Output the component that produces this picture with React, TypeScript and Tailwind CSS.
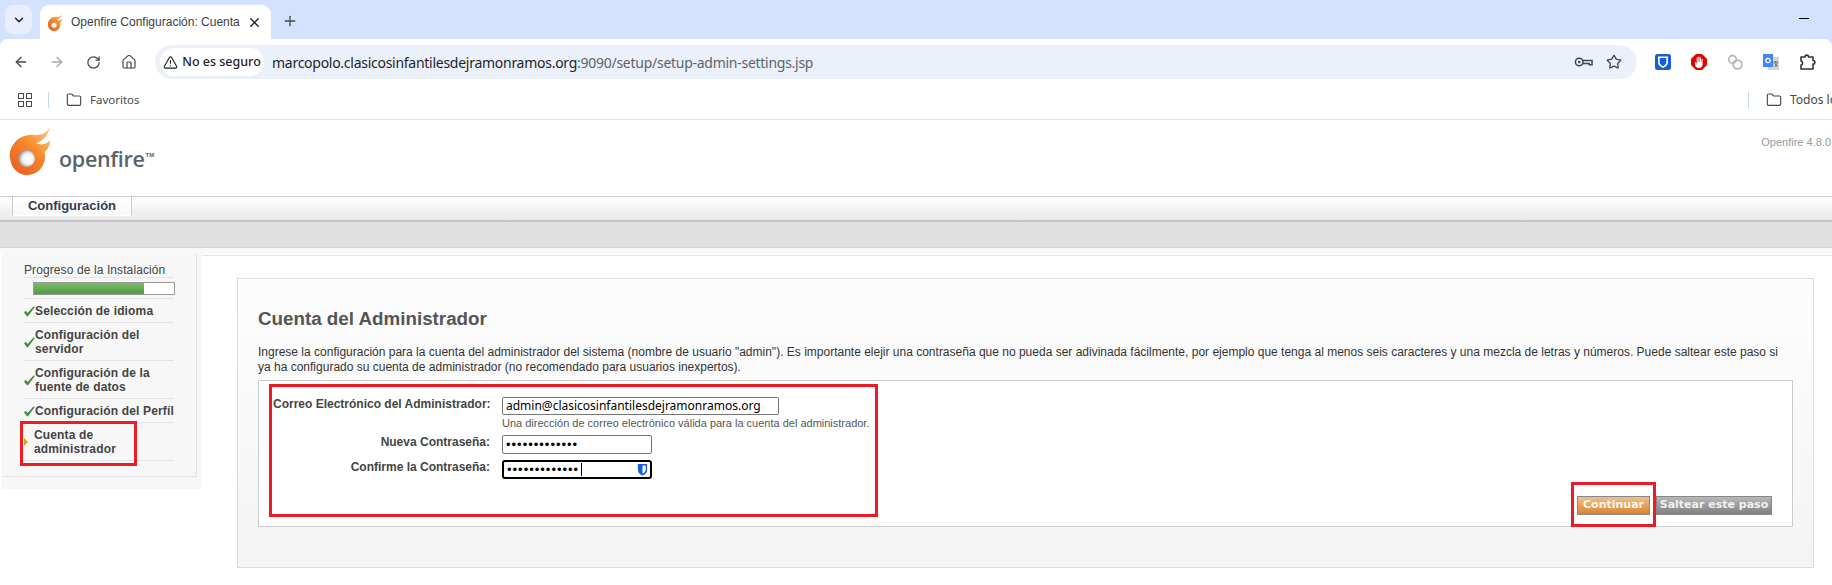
import { ArrowLeft, ArrowRight, ChevronDown, Folder, House, Plus, RotateCw, Star, TriangleAlert, X } from "lucide-react";

const sans = "font-['Liberation_Sans',Arial,sans-serif]";
const ui = "font-['Noto_Sans',sans-serif]";

function Flame({ id, className }: { id: string; className: string }) {
  return (
    <svg viewBox="0 0 42 48" className={className}>
      <defs>
        <linearGradient id={id} x1="0.1" y1="1" x2="0.9" y2="0">
          <stop offset="0" stopColor="#ec5a22" />
          <stop offset="0.55" stopColor="#f6882a" />
          <stop offset="1" stopColor="#fcc77e" />
        </linearGradient>
        <radialGradient id={id + "-hole"} cx="0.58" cy="0.52" r="0.58">
          <stop offset="0" stopColor="#ffffff" />
          <stop offset="0.55" stopColor="#f2f2f2" />
          <stop offset="1" stopColor="#8c8c8c" />
        </radialGradient>
      </defs>
      <path
        d="M41 0C38 6 33 8 27 8C20 7 12 9 7 14C2 19 0 25 1 31C2 41 9 48 18 48C28 48 36 40 36 30C36 28 36 26 35.5 25C39 23 41 18 41 13.3C38 17 32 19 27 16C33 15 39 9 41 0Z"
        fill={`url(#${id})`}
      />
      <circle cx="17.5" cy="31.5" r="8.5" fill={`url(#${id}-hole)`} />
    </svg>
  );
}

function KeyIcon() {
  return (
    <svg viewBox="0 0 20 12" className="w-[19px] h-[12px]" fill="none" stroke="#474747" strokeWidth="1.6">
      <circle cx="5.5" cy="6" r="4" />
      <circle cx="5.5" cy="6" r="1.4" fill="#474747" stroke="none" />
      <path d="M9.5 4.5H19V9H16V7.5H9.5" />
    </svg>
  );
}

function Shield({ className, fill }: { className: string; fill: string }) {
  return (
    <svg viewBox="0 0 12 14" className={className}>
      <path d="M1 1H11V7.5C11 10.5 8.5 12.5 6 13.5C3.5 12.5 1 10.5 1 7.5Z" fill={fill} />
      <path d="M6 2.5H9.5V7.5C9.5 9.2 7.8 10.6 6 11.5Z" fill="#ffffff" />
    </svg>
  );
}

function Toolbar() {
  return (
    <div className="flex items-start h-[45px] pt-[6px] bg-white rounded-t-[8px]">
      <div className="flex items-center h-[34px] w-[155px] shrink-0 text-[#474747]">
        <ArrowLeft size={16} strokeWidth={2} className="ml-[13px]" />
        <ArrowRight size={16} strokeWidth={2} className="ml-[20px] text-[#a8a8a8]" />
        <RotateCw size={15} strokeWidth={2} className="ml-[21px]" />
        <House size={16} strokeWidth={1.8} className="ml-[20px]" />
      </div>
      <div className="flex items-center h-[34px] w-[1482px] rounded-full bg-[#ebf1fb] pl-[5px] shrink-0">
        <div className="flex items-center justify-center gap-[4px] h-[28px] w-[104px] rounded-full bg-white text-[#1f1f1f]">
          <TriangleAlert size={15} strokeWidth={1.8} />
          <span className={`${ui} text-[12.5px] font-medium`}>No es seguro</span>
        </div>
        <span className={`${ui} ml-[8px] text-[14px] text-[#1f1f1f] tracking-[-0.27px]`}>
          marcopolo.clasicosinfantilesdejramonramos.org<span className="text-[#5f6368]">:9090/setup/setup-admin-settings.jsp</span>
        </span>
        <div className="ml-auto flex items-center gap-[13px] pr-[15px]">
          <KeyIcon />
          <Star size={16} strokeWidth={2} className="text-[#474747]" />
        </div>
      </div>
      <div className="flex items-center h-[34px] pl-[18px]">
        <svg viewBox="0 0 16 16" className="w-[16px] h-[16px]">
          <rect width="16" height="16" rx="2.5" fill="#175ddc" />
          <path d="M3 2.5H13V8.5C13 11 10.5 13 8 14C5.5 13 3 11 3 8.5Z" fill="#ffffff" />
          <path d="M8 4H11.3V8.5C11.3 10 9.6 11.4 8 12.2C6.4 11.4 4.7 10 4.7 8.5V4Z" fill="#175ddc" />
        </svg>
        <svg viewBox="0 0 16 16" className="w-[16px] h-[16px] ml-[20px]">
          <path d="M5 0H11L16 5V11L11 16H5L0 11V5Z" fill="#e60000" />
          <path d="M4 8V10.5C4 12.8 5.8 14 7.8 14C10.2 14 11.6 12.4 11.6 10.5V5H10.5V8H10V3.5H8.9V8H8.4V2.6H7.3V8H6.8V3.5H5.7V9.5L4.8 8Z" fill="#ffffff" />
        </svg>
        <svg viewBox="0 0 16 16" className="w-[16px] h-[16px] ml-[20px]" fill="none" stroke="#b5b5b5" strokeWidth="1.7">
          <circle cx="5.5" cy="5.5" r="3.8" />
          <circle cx="10.5" cy="10.5" r="4.4" />
        </svg>
        <svg viewBox="0 0 16 16" className="w-[16px] h-[16px] ml-[20px]">
          <rect x="5" y="3" width="11" height="13" fill="#d4d4d4" />
          <rect x="0" y="0" width="10" height="13" fill="#4285f4" />
          <circle cx="5" cy="6.5" r="2.2" fill="none" stroke="#ffffff" strokeWidth="1.2" />
          <path d="M10.5 8H15M12.7 7V9M11.5 13L14.5 9M11.5 9L14.5 13" stroke="#5f6368" strokeWidth="0.9" fill="none" />
        </svg>
        <svg viewBox="0 0 16 16" className="w-[16px] h-[16px] ml-[21px]" fill="none" stroke="#333333" strokeWidth="1.6">
          <path d="M1 3H5C5 0.5 8.5 0.5 8.5 3H13V6.5C15.5 6.5 15.5 10 13 10V15H1V11C3 11 3 7 1 7Z" strokeLinejoin="round" />
        </svg>
      </div>
    </div>
  );
}

function ChromeBar() {
  return (
    <div className="bg-[#d3e3fd]">
      <div className="flex items-end h-[39px]">
        <div className="flex items-center justify-center w-[27px] h-[29px] ml-[5px] mb-[5px] rounded-[8px] bg-[#e8effb]">
          <ChevronDown size={14} strokeWidth={2.5} className="text-[#1f1f1f]" />
        </div>
        <div className="flex items-center w-[231px] h-[34px] ml-[8px] pl-[7px] rounded-t-[9px] bg-white">
          <Flame id="favicon" className="w-[16px] h-[17px] shrink-0" />
          <span className={`${sans} ml-[8px] w-[166px] text-[12px] text-[#3c4043] whitespace-nowrap`}>
            Openfire Configuración: Cuenta
          </span>
          <X size={15} strokeWidth={2.2} className="ml-[10px] text-[#1f1f1f]" />
        </div>
        <Plus size={16} strokeWidth={2} className="ml-[11px] mb-[10px] text-[#474747]" />
        <div className="ml-auto w-[10px] h-px bg-black mr-[23px] mb-[20px]" />
      </div>
      <Toolbar />
      <div className="flex items-center h-[36px] pb-[4px] bg-white border-b border-[#e2e2e2] text-[#474747]">
        <span className="grid grid-cols-2 gap-[2px] ml-[18px] w-[14px] h-[14px]">
          <i className="border-[1.5px] border-[#474747]" />
          <i className="border-[1.5px] border-[#474747]" />
          <i className="border-[1.5px] border-[#474747]" />
          <i className="border-[1.5px] border-[#474747]" />
        </span>
        <span className="ml-[16px] w-px h-[16px] bg-[#c4d6f2]" />
        <Folder size={16} strokeWidth={1.7} className="ml-[17px]" />
        <span className={`${ui} ml-[8px] text-[11.5px] text-[#474747]`}>Favoritos</span>
        <span className="ml-auto w-px h-[16px] bg-[#c4d6f2]" />
        <Folder size={16} strokeWidth={1.7} className="ml-[17px]" />
        <span className={`${ui} ml-[8px] w-[42px] text-[12px] text-[#474747] whitespace-nowrap`}>Todos los</span>
      </div>
    </div>
  );
}

function Check() {
  return (
    <svg viewBox="0 0 12 11" className="w-[11px] h-[11px] shrink-0">
      <path d="M0 6.5L1.8 4.6L4 7.2L10 0.3L12 0.3L4.4 10.8H3.2Z" fill="#3f8f3c" />
    </svg>
  );
}

const steps: string[][] = [
  ["Selección de idioma"],
  ["Configuración del", "servidor"],
  ["Configuración de la", "fuente de datos"],
  ["Configuración del Perfíl"],
];

function Sidebar() {
  return (
    <div className="ml-[2px] w-[200px] shrink-0 self-start bg-[#f7f7f7]">
      <div className="h-[223px] w-[195px] bg-[#f7f7f7] border-r border-b border-[#e3e3e3] pl-[22px] pt-[8px]">
        <div className={`w-[150px] ${sans} text-[12px] text-[#444444]`}>
          <div className="h-[16px] leading-[16px] border-b border-[#e3e3e3] tracking-[0.1px]">Progreso de la Instalación</div>
          <div className="h-[21px] pl-[9px] pt-[4px] border-b border-[#e3e3e3]">
            <div className="h-[13px] w-[142px] border border-[#999999] bg-white">
              <div className="h-full w-[110px] bg-gradient-to-b from-[#7dbb6b] to-[#4f9c3f]" />
            </div>
          </div>
          {steps.map((s) => (
            <div key={s[0]} className="flex items-center border-b border-[#e3e3e3] pt-[5px] pb-[4px] font-bold leading-[14px]">
              <Check />
              <div className="tracking-[0.15px]">
                {s.map((l) => (
                  <div key={l}>{l}</div>
                ))}
              </div>
            </div>
          ))}
          <div className="relative flex items-center border-b border-[#e3e3e3] pt-[5px] pb-[4px] font-bold leading-[14px] tracking-[0.15px]">
            <span className="w-0 h-0 border-y-[4px] border-y-transparent border-l-[4px] border-l-[#d9a514] mr-[6px]" />
            <div>
              <div>Cuenta de</div>
              <div>administrador</div>
            </div>
            <div className="absolute left-[-4px] top-[-2px] w-[117px] h-[45px] border-[3px] border-[#ed1c24]" />
          </div>
        </div>
      </div>
      <div className="h-[12px]" />
    </div>
  );
}

export default function App() {
  return (
    <div className={`h-[585px] overflow-hidden bg-white ${sans}`}>
      <ChromeBar />
      <div className="flex justify-between h-[76px] bg-white">
        <div className="flex items-start pl-[9px] pt-[7px]">
          <Flame id="logo" className="w-[42px] h-[48px]" />
          <span className="ml-[8px] mt-[18px] leading-[28px] font-['Open_Sans',sans-serif] font-semibold text-[21.5px] tracking-[-0.3px] text-[#5a6468]">
            openfire
          </span>
          <span className="mt-[25px] ml-[1px] leading-[6px] text-[6px] font-bold text-[#5a6468]">TM</span>
        </div>
        <div className="pt-[16px] pr-px text-[11px] text-[#999999] leading-[13px]">Openfire 4.8.0</div>
      </div>
      <div className="flex items-start h-[26px] pl-[12px] border-t border-[#cccccc] border-b-[2px] border-b-[#c4c4c4] bg-gradient-to-b from-white to-[#e9e9e9]">
        <div className="flex items-center justify-center w-[120px] h-[19px] border-x border-x-[#cccccc] border-b border-b-white bg-white/60 text-[13px] font-bold text-[#333c4c]">
          Configuración
        </div>
      </div>
      <div className="h-[26px] bg-[#e0e0e0] border-b border-[#d5d5d5]" />
      <div className="h-[6px] bg-[#f8f8f8]" />
      <div className="flex">
        <Sidebar />
        <div className="flex-1 mt-px border-t border-[#e3e3e3] pt-[22px] pl-[35px] pr-[18px]">
          <div className="h-[290px] border border-[#dcdcdc] bg-gradient-to-b from-[#fdfdfd] to-[#f4f4f4] px-[20px] pt-[29px]">
            <h1 className="text-[18.8px] leading-[22px] font-bold text-[#555555]">Cuenta del Administrador</h1>
            <p className="mt-[15px] text-[12px] leading-[15px] text-[#333333]">
              Ingrese la configuración para la cuenta del administrador del sistema (nombre de usuario "admin"). Es importante elejir una contraseña que no pueda ser adivinada fácilmente, por ejemplo que tenga al menos seis caracteres y una mezcla de letras y números. Puede saltear este paso si ya ha configurado su cuenta de administrador (no recomendado para usuarios inexpertos).
            </p>
            <div className="relative flex justify-between items-end h-[147px] mt-[5px] border border-[#cccccc] bg-white pl-[14px] pr-[20px] pb-[11px]">
              <div className="self-start pt-[16px]">
                <div className="flex">
                  <label className="w-[217px] text-right text-[12px] font-bold text-[#444444] leading-[14px] whitespace-nowrap">Correo Electrónico del Administrador:</label>
                  <div className="ml-[12px]">
                    <input
                      readOnly
                      value="admin@clasicosinfantilesdejramonramos.org"
                      className={`block w-[277px] h-[18px] px-[3px] rounded-[2px] border border-[#767676] ${ui} text-[12px] text-black outline-none`}
                    />
                    <div className="mt-[1px] text-[11px] leading-[14px] text-[#555555]">Una dirección de correo electrónico válida para la cuenta del administrador.</div>
                  </div>
                </div>
                <div className="flex items-start mt-[5px]">
                  <label className="w-[217px] text-right text-[12px] font-bold text-[#444444] leading-[14px]">Nueva Contraseña:</label>
                  <input
                    readOnly
                    type="password"
                    value="1234567890123"
                    className="ml-[12px] w-[150px] h-[19px] px-[3px] rounded-[2px] border border-[#767676] text-[13px] tracking-[1px] outline-none"
                  />
                </div>
                <div className="flex items-start mt-[6px]">
                  <label className="w-[217px] text-right text-[12px] font-bold text-[#444444] leading-[14px]">Confirme la Contraseña:</label>
                  <div className="relative ml-[12px]">
                    <input
                      readOnly
                      type="password"
                      value="1234567890123"
                      className="block w-[150px] h-[19px] px-[3px] rounded-[3px] border-2 border-black text-[13px] tracking-[1px] outline-none"
                    />
                    <span className="absolute left-[79px] top-[3px] w-px h-[13px] bg-black" />
                    <Shield className="absolute right-[4px] top-[3px] w-[11px] h-[13px]" fill="#175ddc" />
                  </div>
                </div>
              </div>
              <div className="relative flex gap-[6px] font-['DejaVu_Sans',sans-serif] text-[11px] font-bold text-white">
                <button className="w-[73px] h-[19px] border border-[#888888] bg-gradient-to-b from-[#ecc08c] to-[#d8842a] text-[#fff7ea]">Continuar</button>
                <button className="w-[116px] h-[19px] border border-[#888888] bg-gradient-to-b from-[#b8b8b8] to-[#808080] text-[#f2f2f2]">Saltear este paso</button>
                <div className="absolute left-[-6px] top-[-14px] w-[85px] h-[45px] border-[3px] border-[#ed1c24]" />
              </div>
              <div className="absolute left-[10px] top-[3px] w-[609px] h-[133px] border-[3px] border-[#ed1c24]" />
            </div>
          </div>
        </div>
      </div>
    </div>
  );
}
